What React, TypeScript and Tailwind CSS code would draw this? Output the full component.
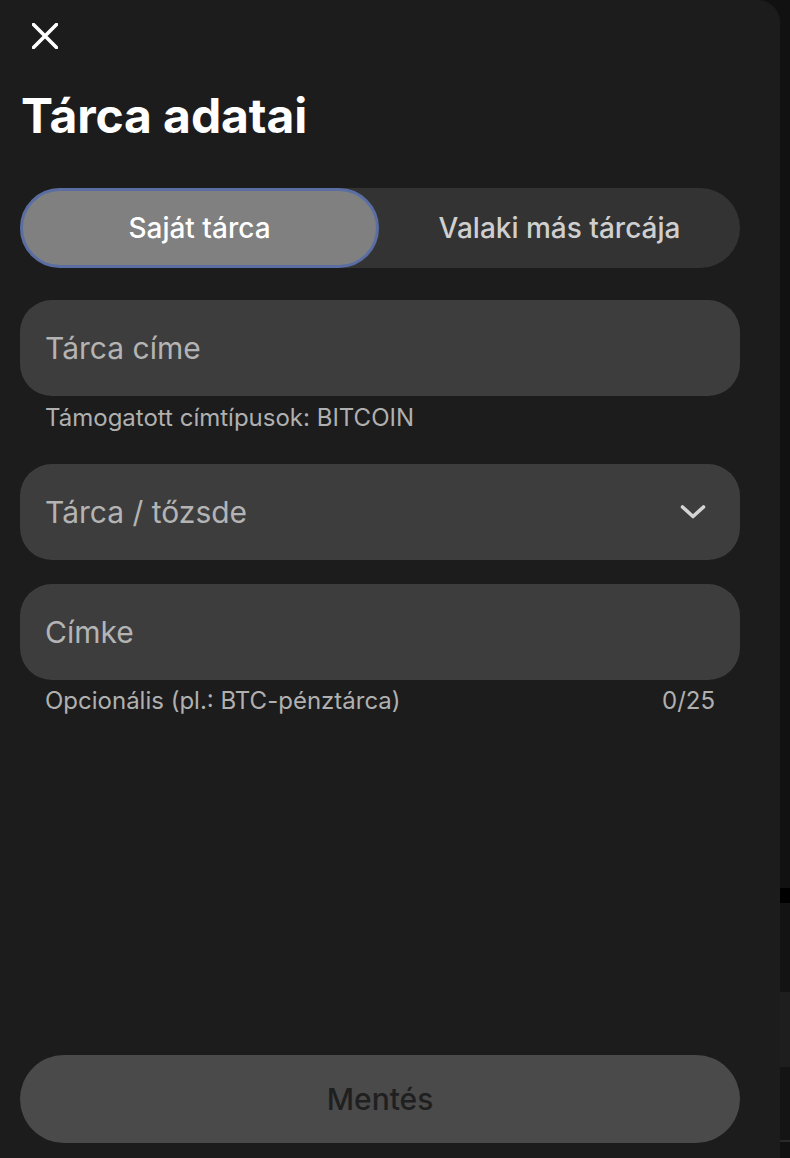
import { useState } from "react";

function CloseIcon() {
  return (
    <svg width="26" height="26" viewBox="0 0 26 26" fill="none">
      <path d="M1.5 1.5L24.5 24.5M24.5 1.5L1.5 24.5" stroke="white" strokeWidth="3.6" strokeLinecap="round" />
    </svg>
  );
}

function ChevronDown() {
  return (
    <svg width="26" height="16" viewBox="0 0 26 16" fill="none">
      <path d="M2.5 3L13 12.5L23.5 3" stroke="#d4d4d4" strokeWidth="3.6" strokeLinecap="round" strokeLinejoin="round" />
    </svg>
  );
}

export default function App() {
  const [tab, setTab] = useState<"own" | "other">("own");
  const [label, setLabel] = useState("");

  return (
    <div
      className="flex h-[1158px] w-[790px] overflow-hidden bg-[#111111]"
      style={{ fontFamily: "Inter, 'Noto Sans', sans-serif" }}
    >
      {/* Drawer */}
      <div className="flex h-[1180px] w-[780px] shrink-0 flex-col rounded-r-[22px] bg-[#1c1c1c] pl-5 pr-10">
        <button className="mt-[22px] ml-[11px] flex h-[27px] w-[27px] items-center justify-center">
          <CloseIcon />
        </button>

        <h1 className="mt-[37px] ml-[1px] text-[48px] leading-[60px] font-bold tracking-[-0.1px] text-white">
          Tárca adatai
        </h1>

        {/* Segmented control */}
        <div className="mt-[42px] flex h-[80px] rounded-full bg-[#333333]">
          <button
            onClick={() => setTab("own")}
            className={
              tab === "own"
                ? "flex w-[359px] items-center justify-center rounded-full border-[3px] border-[#5b6ea3] bg-[#808080] text-[28px] font-medium text-white"
                : "flex w-[359px] items-center justify-center rounded-full text-[28px] font-medium text-[#cfcfcf]"
            }
          >
            Saját tárca
          </button>
          <button
            onClick={() => setTab("other")}
            className={
              tab === "other"
                ? "flex flex-1 items-center justify-center rounded-full border-[3px] border-[#5b6ea3] bg-[#808080] text-[28px] font-medium text-white"
                : "flex flex-1 items-center justify-center rounded-full text-[28px] font-medium text-[#cfcfcf]"
            }
          >
            Valaki más tárcája
          </button>
        </div>

        {/* Address */}
        <div className="mt-[32px] flex h-[96px] items-center rounded-[32px] bg-[#3d3d3d] px-[25px]">
          <input
            placeholder="Tárca címe"
            className="w-full bg-transparent text-[30px] text-white outline-none placeholder:text-[#b4b4b4]"
          />
        </div>
        <p className="mt-[8px] pl-[25px] text-[24px] leading-[28px] text-[#b0b0b0]">
          Támogatott címtípusok: BITCOIN
        </p>

        {/* Wallet / exchange */}
        <div className="mt-[32px] flex h-[96px] items-center justify-between rounded-[32px] bg-[#3d3d3d] pr-[34px] pl-[25px]">
          <span className="text-[30px] text-[#b4b4b4]">Tárca / tőzsde</span>
          <ChevronDown />
        </div>

        {/* Label */}
        <div className="mt-[24px] flex h-[96px] items-center rounded-[32px] bg-[#3d3d3d] px-[25px]">
          <input
            value={label}
            maxLength={25}
            onChange={(e) => setLabel(e.target.value)}
            placeholder="Címke"
            className="w-full bg-transparent text-[30px] text-white outline-none placeholder:text-[#b4b4b4]"
          />
        </div>
        <div className="mt-[7px] flex justify-between px-[25px] text-[24px] leading-[28px] text-[#b0b0b0]">
          <span>Opcionális (pl.: BTC-pénztárca)</span>
          <span>{label.length}/25</span>
        </div>

        <button className="mt-[340px] flex h-[88px] items-center justify-center rounded-full bg-[#4a4a4a] text-[30px] font-medium text-[#1f1f1f]">
          Mentés
        </button>
      </div>

      {/* Page behind the drawer */}
      <div className="flex flex-1 flex-col">
        <div className="h-[888px]" />
        <div className="h-[15px] bg-black" />
        <div className="h-[89px] bg-[#131313]" />
        <div className="h-[75px] bg-[#1e1e1e]" />
        <div className="h-[73px] bg-[#141414]" />
        <div className="h-[2px] bg-[#2a2a2a]" />
      </div>
    </div>
  );
}
